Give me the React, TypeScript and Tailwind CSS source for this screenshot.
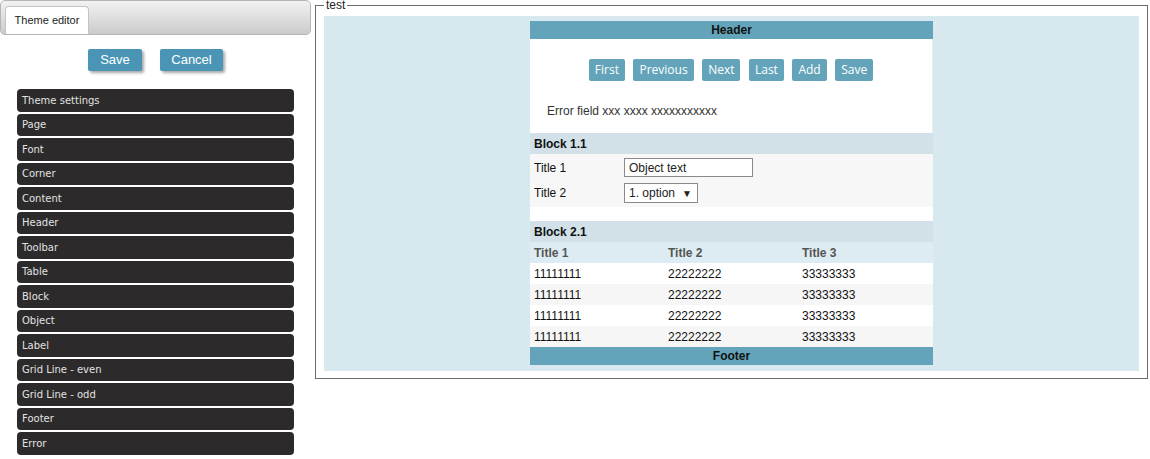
import React from 'react';

const sections = [
  'Theme settings',
  'Page',
  'Font',
  'Corner',
  'Content',
  'Header',
  'Toolbar',
  'Table',
  'Block',
  'Object',
  'Label',
  'Grid Line - even',
  'Grid Line - odd',
  'Footer',
  'Error',
];

const toolbarButtons = ['First', 'Previous', 'Next', 'Last', 'Add', 'Save'];

const arial = { fontFamily: '"Liberation Sans", Arial, sans-serif' };

/**
 * Sidebar - theme editor tab with the list of sections
 */
function Sidebar() {
  return (
    <div className="w-[311px] flex-shrink-0">
      {/* Tab bar */}
      <div className="h-[35px] rounded-[5px] border border-[#b5b5b5] bg-gradient-to-b from-[#f2f2f2] to-[#cbcbcb] pl-[4px] pt-[6px] flex items-end">
        <div className="h-[28px] w-[84px] rounded-t-[4px] border border-b-0 border-[#c4c4c4] bg-white flex items-center justify-center text-[11px] text-[#222]">
          Theme editor
        </div>
      </div>

      {/* Actions */}
      <div className="flex justify-center gap-[18px] mt-[14px] text-[13px]">
        <button className="h-[22px] w-[54px] rounded-[2px] bg-[#4a95b6] text-white shadow-[2px_2px_3px_rgba(0,0,0,0.35)]">
          Save
        </button>
        <button className="h-[22px] w-[63px] rounded-[2px] bg-[#4a95b6] text-white shadow-[2px_2px_3px_rgba(0,0,0,0.35)]">
          Cancel
        </button>
      </div>

      {/* Sections */}
      <div className="flex flex-col gap-[2px] mx-[17px] mt-[18px]" style={{ fontFamily: '"DejaVu Sans", Verdana, sans-serif' }}>
        {sections.map((s) => (
          <div key={s} className="h-[22.5px] rounded-[4px] bg-[#2c2a2a] text-[#e2e2e2] text-[10px] pl-[5px] flex items-center">
            {s}
          </div>
        ))}
      </div>
    </div>
  );
}

/**
 * Preview - sample page rendered with the current theme
 */
function Preview() {
  const rows = [0, 1, 2, 3];
  return (
    <div className="w-[403px] bg-white text-[12px] text-[#111]">
      <div className="h-[18px] bg-[#63a4ba] font-bold flex items-center justify-center">Header</div>

      <div className="pt-[20px] pb-[13px] border-r border-[#e6eef2]">
        <div className="flex justify-center gap-[8.5px]" style={{ fontFamily: '"Open Sans", sans-serif' }}>
          {toolbarButtons.map((b) => (
            <span key={b} className="h-[22px] px-[6px] rounded-[2px] bg-[#63a4ba] text-white text-[12px] flex items-center">
              {b}
            </span>
          ))}
        </div>
        <div className="mt-[21px] pl-[17px] text-[#333]">Error field xxx xxxx xxxxxxxxxxx</div>
      </div>

      {/* Block 1.1 */}
      <div className="h-[21px] bg-[#d2e1e7] font-bold pl-[4px] flex items-center">Block 1.1</div>
      <div className="bg-[#f7f7f7] pt-[4px] pb-[4px] px-[4px]">
        <div className="flex items-center h-[19px]">
          <span className="w-[90px]">Title 1</span>
          <span className="w-[129px] h-[19px] border border-[#8a8a8a] bg-white pl-[4px] flex items-center text-[#222]">
            Object text
          </span>
        </div>
        <div className="flex items-center h-[20px] mt-[6px]">
          <span className="w-[90px]">Title 2</span>
          <span className="w-[74px] h-[20px] border border-[#8a8a8a] bg-white pl-[4px] pr-[5px] flex items-center justify-between text-[#222]">
            1. option <span className="text-[10px]">▼</span>
          </span>
        </div>
      </div>
      <div className="h-[14px] bg-white" />

      {/* Block 2.1 */}
      <div className="h-[21px] bg-[#d2e1e7] font-bold pl-[4px] flex items-center">Block 2.1</div>
      <div className="grid grid-cols-[134px_134px_1fr] h-[21px] bg-[#ddecf2] font-bold text-[#555] items-center pl-[4px]">
        <span>Title 1</span>
        <span>Title 2</span>
        <span>Title 3</span>
      </div>
      {rows.map((r) => (
        <div
          key={r}
          className={`grid grid-cols-[134px_134px_1fr] h-[21px] items-center pl-[4px] ${r % 2 ? 'bg-[#f6f6f6]' : 'bg-white'}`}
        >
          <span>11111111</span>
          <span>22222222</span>
          <span>33333333</span>
        </div>
      ))}
      <div className="h-[18px] bg-[#63a4ba] font-bold flex items-center justify-center">Footer</div>
    </div>
  );
}

export default function App() {
  return (
    <div className="flex w-[1150px] h-[459px] bg-white text-[#222]" style={arial}>
      <Sidebar />
      <fieldset className="ml-[4px] mr-[2px] w-[833px] h-[379px] border border-[#6b6b6b] px-[8px] pb-[7px] pt-[5px] min-w-0">
        <legend className="px-[2px] text-[12px] leading-[11px] text-[#222]">test</legend>
        <div className="h-[355px] bg-[#d8e8ef] flex justify-center items-start pt-[5px]">
          <Preview />
        </div>
      </fieldset>
    </div>
  );
}
